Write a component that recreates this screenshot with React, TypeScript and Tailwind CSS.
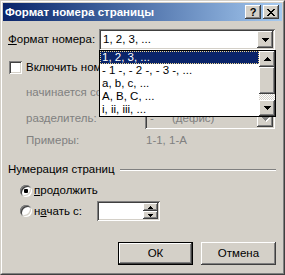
import React from "react";

const raised =
  "shadow-[inset_-1px_-1px_#404040,inset_1px_1px_#ffffff,inset_-2px_-2px_#808080,inset_2px_2px_#d4d0c8]";
const sunken =
  "shadow-[inset_1px_1px_#808080,inset_-1px_-1px_#ffffff,inset_2px_2px_#404040,inset_-2px_-2px_#d4d0c8]";

function DownArrow({ color = "#000000" }: { color?: string }) {
  return (
    <svg width="7" height="4" viewBox="0 0 7 4" shapeRendering="crispEdges">
      <path d="M0 0h7v1H0zM1 1h5v1H1zM2 2h3v1H2zM3 3h1v1H3z" fill={color} />
    </svg>
  );
}

function UpArrow() {
  return (
    <svg width="7" height="4" viewBox="0 0 7 4" shapeRendering="crispEdges">
      <path d="M3 0h1v1H3zM2 1h3v1H2zM1 2h5v1H1zM0 3h7v1H0z" fill="#000000" />
    </svg>
  );
}

function SmallArrow({ up }: { up?: boolean }) {
  return (
    <svg width="5" height="3" viewBox="0 0 5 3" shapeRendering="crispEdges">
      <path
        d={up ? "M2 0h1v1H2zM1 1h3v1H1zM0 2h5v1H0z" : "M0 0h5v1H0zM1 1h3v1H1zM2 2h1v1H2z"}
        fill="#000000"
      />
    </svg>
  );
}

function Radio({ checked }: { checked?: boolean }) {
  return (
    <div className={`w-[12px] h-[12px] rounded-full bg-white flex items-center justify-center ${sunken}`}>
      {checked && <div className="w-[4px] h-[4px] bg-black rounded-[1px]" />}
    </div>
  );
}

const formats = ["1, 2, 3, ...", "- 1 -, - 2 -, - 3 -, ...", "a, b, c, ...", "A, B, C, ...", "i, ii, iii, ..."];

export default function App() {
  return (
    <div className="w-[285px] h-[275px] border border-t-[#d4d0c8] border-l-[#d4d0c8] border-r-[#404040] border-b-[#404040] font-['Liberation_Sans',Arial,sans-serif] text-[11.5px] text-black select-none">
      <div className="h-full border border-t-white border-l-white border-r-[#808080] border-b-[#808080] bg-[#d4d0c8] p-px flex flex-col">
        {/* title bar */}
        <div className="h-[18px] shrink-0 flex items-center bg-gradient-to-r from-[#0a246a] to-[#a6caf0] pl-[2px] pr-[3px]">
          <span className="flex-1 text-white font-bold leading-[13px]">Формат номера страницы</span>
          <div className="flex gap-[2px]">
            <div className={`w-[16px] h-[14px] bg-[#d4d0c8] flex items-center justify-center font-bold text-[11px] leading-none ${raised}`}>
              ?
            </div>
            <div className={`w-[16px] h-[14px] bg-[#d4d0c8] flex items-center justify-center ${raised}`}>
              <svg width="8" height="7" viewBox="0 0 8 7" shapeRendering="crispEdges">
                <path
                  d="M0 0h2v1H0zM6 0h2v1H6zM1 1h2v1H1zM5 1h2v1H5zM2 2h4v1H2zM3 3h2v1H3zM2 4h4v1H2zM1 5h2v1H1zM5 5h2v1H5zM0 6h2v1H0zM6 6h2v1H6z"
                  fill="#000000"
                />
              </svg>
            </div>
          </div>
        </div>

        <div className="flex flex-col pl-[5px] pr-[6px] leading-[13px]">
          {/* format combo */}
          <div className="mt-[8px] h-[21px] flex items-center">
            <div className="w-[91px]">
              <span className="underline">Ф</span>ормат номера:
            </div>
            <div className="relative w-[176px] h-[21px]">
              <div className={`h-full bg-white p-[2px] flex ${sunken}`}>
                <div className="flex-1 pl-[2px] flex items-center">1, 2, 3, ...</div>
                <div className={`w-[16px] bg-[#d4d0c8] flex items-center justify-center ${raised}`}>
                  <DownArrow />
                </div>
              </div>
              {/* open list */}
              <div className="absolute left-0 top-[21px] w-[177px] h-[67px] border border-black bg-white z-10 flex">
                <div className="flex-1 flex flex-col">
                  {formats.map((f, i) => (
                    <div
                      key={f}
                      className={
                        i === 0
                          ? "h-[13px] bg-[#0a246a] text-white border border-dotted border-[#f0d890] pl-[1px] leading-[11px]"
                          : "h-[13px] pl-[2px] whitespace-nowrap"
                      }
                    >
                      {f}
                    </div>
                  ))}
                </div>
                <div className="w-[16px] flex flex-col">
                  <div className={`h-[16px] bg-[#d4d0c8] flex items-center justify-center ${raised}`}>
                    <UpArrow />
                  </div>
                  <div className={`h-[27px] bg-[#d4d0c8] ${raised}`} />
                  <div className="flex-1 bg-[image:repeating-conic-gradient(#d4d0c8_0_25%,#ffffff_0_50%)] bg-size-[2px_2px]" />
                  <div className={`h-[16px] bg-[#d4d0c8] flex items-center justify-center ${raised}`}>
                    <DownArrow />
                  </div>
                </div>
              </div>
            </div>
          </div>

          {/* chapter checkbox, partly under the open list */}
          <div className="mt-[11px] h-[13px] flex items-center pl-[1px] gap-[4px]">
            <div className={`w-[13px] h-[13px] bg-white ${sunken}`} />
            <span className="w-[73px] overflow-hidden whitespace-nowrap">Включить номер главы</span>
          </div>

          <div className="mt-[12px] h-[13px] pl-[18px] flex">
            <span className="w-[73px] overflow-hidden whitespace-nowrap text-[#808080]">начинается со стиля:</span>
          </div>

          {/* separator */}
          <div className="mt-[9px] h-[21px] pl-[18px] flex items-center text-[#808080]">
            <div className="w-[119px]">разделитель:</div>
            <div className={`w-[130px] h-[21px] p-[2px] flex bg-[#d4d0c8] ${sunken}`}>
              <div className="flex-1 flex items-center pl-[3px]">
                <span className="w-[22px]">-</span>
                <span>(дефис)</span>
              </div>
              <div className={`w-[16px] flex items-center justify-center relative ${raised}`}>
                <div className="relative">
                  <div className="absolute left-px top-px">
                    <DownArrow color="#ffffff" />
                  </div>
                  <div className="relative">
                    <DownArrow color="#808080" />
                  </div>
                </div>
              </div>
            </div>
          </div>

          <div className="mt-[5px] h-[13px] pl-[18px] flex text-[#808080]">
            <div className="w-[119px]">Примеры:</div>
            <div className="pl-[1px]">1-1, 1-А</div>
          </div>

          {/* page numbering group */}
          <div className="mt-[16px] h-[13px] flex items-center">
            <span className="whitespace-nowrap">Нумерация страниц</span>
            <div className="flex-1 ml-[5px] h-[2px] border-t border-t-[#808080] border-b border-b-white" />
          </div>

          <div className="mt-[8px] h-[13px] flex items-center pl-[12px] gap-[2px]">
            <Radio checked />
            <span>
              <span className="underline">п</span>родолжить
            </span>
          </div>

          <div className="mt-[4px] h-[20px] flex items-center pl-[12px] gap-[2px]">
            <Radio />
            <span className="w-[61px]">
              н<span className="underline">а</span>чать с:
            </span>
            <div className={`w-[63px] h-[20px] bg-white p-[2px] flex ${sunken}`}>
              <div className="flex-1" />
              <div className="w-[15px] flex flex-col">
                <div className={`flex-1 bg-[#d4d0c8] flex items-center justify-center ${raised}`}>
                  <SmallArrow up />
                </div>
                <div className={`flex-1 bg-[#d4d0c8] flex items-center justify-center ${raised}`}>
                  <SmallArrow />
                </div>
              </div>
            </div>
          </div>

          {/* buttons */}
          <div className="mt-[21px] flex justify-end gap-[8px]">
            <div className="w-[75px] h-[23px] border border-black">
              <div className={`h-full bg-[#d4d0c8] flex items-center justify-center ${raised}`}>ОК</div>
            </div>
            <div className={`w-[75px] h-[23px] bg-[#d4d0c8] flex items-center justify-center ${raised}`}>Отмена</div>
          </div>
        </div>
      </div>
    </div>
  );
}
